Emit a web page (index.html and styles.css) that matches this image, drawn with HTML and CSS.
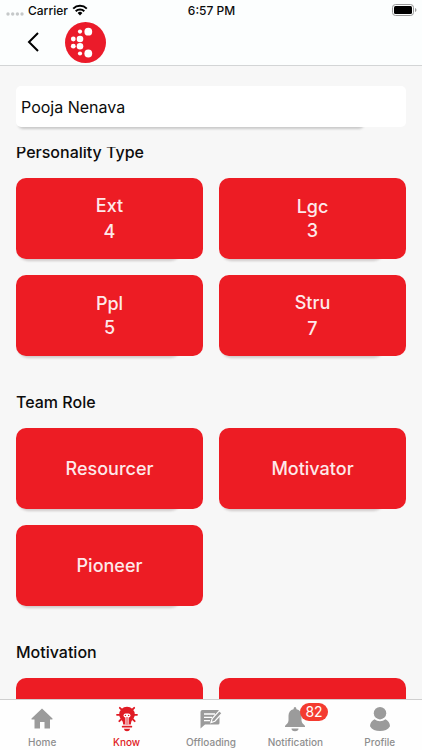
FILE: index.html
```html
<!DOCTYPE html>
<html lang="en">
<head>
<meta charset="utf-8">
<meta name="viewport" content="width=device-width, initial-scale=1">
<title>Know</title>
<link rel="stylesheet" href="styles.css">
</head>
<body>
<div class="app">
  <header class="header">
    <div class="status">
      <div class="carrier">
        <svg class="signal" viewBox="0 0 18 4" aria-hidden="true"><circle cx="2" cy="2" r="1.7"/><circle cx="6.7" cy="2" r="1.7"/><circle cx="11.4" cy="2" r="1.7"/><circle cx="16" cy="2" r="1.7"/></svg>
        <span>Carrier</span>
        <svg class="wifi" viewBox="0 0 16 12" aria-hidden="true"><path d="M1.2 4.6a9.8 9.8 0 0 1 13.6 0M3.7 7.2a6.2 6.2 0 0 1 8.6 0" fill="none" stroke="#000" stroke-width="2"/><path d="M5.6 9a3.5 3.5 0 0 1 4.8 0L8 11.5z"/></svg>
      </div>
      <time>6:57 PM</time>
      <svg class="battery" viewBox="0 0 25 12" aria-hidden="true"><rect x=".5" y=".5" width="21" height="11" rx="3" fill="none" stroke="#999"/><rect x="2" y="2" width="18" height="8" rx="1.5"/><path d="M23 4v4q1.500-.6 1.500-2T23 4" fill="#999"/></svg>
    </div>
    <nav class="nav">
      <button class="back" type="button" aria-label="Back"><svg viewBox="0 0 12 20" aria-hidden="true"><path d="M11 1L2 10l9 9" fill="none" stroke="#000" stroke-width="2"/></svg></button>
      <svg class="logo" viewBox="0 0 41 41" role="img" aria-label="Logo"><circle cx="20.500" cy="20.500" r="20.500" fill="#eb1b2a"/><g fill="#fff"><circle cx="23.300" cy="9.700" r="3.900"/><circle cx="15" cy="9.600" r="2.100"/><circle cx="15" cy="17" r="3.300"/><circle cx="8.300" cy="17" r="2.400"/><circle cx="15" cy="24.200" r="3.300"/><circle cx="8.300" cy="24.200" r="2.400"/><circle cx="15" cy="31.500" r="2.100"/><circle cx="23.300" cy="31.500" r="3.900"/></g></svg>
    </nav>
  </header>
  <div class="search">
    <input class="search-box" type="text" value="Pooja Nenava" aria-label="Person">
  </div>
  <main class="content">
    <div class="sections">
      <section>
        <h2>Personality Type</h2>
        <div class="cards">
          <div class="card spaced"><span>Ext</span><span>4</span></div>
          <div class="card"><span>Lgc</span><span>3</span></div>
          <div class="card"><span>Ppl</span><span>5</span></div>
          <div class="card spaced"><span>Stru</span><span>7</span></div>
        </div>
      </section>
      <section>
        <h2>Team Role</h2>
        <div class="cards">
          <div class="card"><span>Resourcer</span></div>
          <div class="card"><span>Motivator</span></div>
          <div class="card"><span>Pioneer</span></div>
        </div>
      </section>
      <section>
        <h2>Motivation</h2>
        <div class="cards">
          <div class="card"></div>
          <div class="card"></div>
        </div>
      </section>
    </div>
  </main>
  <nav class="tabs">
    <a class="tab" href="#home">
      <svg viewBox="0 0 24 26" aria-hidden="true"><path d="M12 2.500L1.500 12.600Q1 13.500 2 13.500h2.500V22.500h5.500v-6.500h4.500v6.500H20v-9h2q1 0 .5-.9z"/></svg>
      <span>Home</span>
    </a>
    <a class="tab active" href="#know" aria-current="page">
      <svg viewBox="0 0 24 26" aria-hidden="true"><path d="M12 .8a7.800 7.800 0 0 0-7.800 7.800c0 3.600 2.700 5.200 3.600 7.400l.4 2.500h7.600l.4-2.500c.9-2.200 3.600-3.800 3.600-7.400A7.800 7.800 0 0 0 12 .8z"/><path d="M6.500 3.500l-1.700-1.700M17.500 3.500l1.700-1.700M4.500 8.800H2M19.500 8.800H22M6 13.500l-1.700 1.700M18 13.500l1.700 1.700" stroke="currentColor" stroke-width="1.800" stroke-linecap="round"/><path d="M12 18.500V10" stroke="#fff" stroke-width="3.200"/><rect x="8.500" y="7.500" width="7" height="4" rx="2" fill="#fff"/><path d="M12 18.500V11" stroke="currentColor" stroke-width="1"/><circle cx="10.400" cy="9.400" r=".7"/><circle cx="13.600" cy="9.400" r=".7"/><rect x="6.800" y="19.700" width="10.400" height="1.900" rx=".9"/><path d="M8.800 22.700h6.400q-.7 2.500-3.200 2.500t-3.200-2.500z"/></svg>
      <span>Know</span>
    </a>
    <a class="tab" href="#offloading">
      <svg viewBox="0 0 24 26" aria-hidden="true"><path d="M3.500 4H19a1.500 1.500 0 0 1 1.500 1.500V17a1.500 1.500 0 0 1-1.500 1.500H6L1.500 22.500V6Q1.500 4 3.500 4z"/><path d="M5 8h11M5 11.300h8M5 14.600h6" stroke="#fff" stroke-width="1.300"/><path d="M12 16.500l1.200-4L20.500 4.700l2.600 2.500-7.200 8z" stroke="#fff" stroke-width="1.200"/></svg>
      <span>Offloading</span>
    </a>
    <a class="tab" href="#notification">
      <svg viewBox="0 0 24 26" aria-hidden="true"><path d="M12 1q1.300 0 1.500 2.300c3.200.7 5 3.200 5 6.500v4.700c0 2.500 2.500 4 3.500 5.500v1H2v-1c1-1.500 3.500-3 3.500-5.500V9.800c0-3.300 1.800-5.800 5-6.500Q10.700 1 12 1zM8.500 22.500h7a3.500 2.700 0 0 1-7 0z"/></svg>
      <span>Notification</span>
      <span class="badge">82</span>
    </a>
    <a class="tab" href="#profile">
      <svg viewBox="0 0 24 26" aria-hidden="true"><circle cx="12" cy="7.200" r="6.200"/><path d="M6.500 13.200a8.500 8.500 0 0 0 11 0c2.500 1.200 4.500 3.800 4.500 7C20 23.500 16.500 25 12 25S4 23.500 2 20.200c0-3.200 2-5.800 4.500-7z"/></svg>
      <span>Profile</span>
    </a>
  </nav>
</div>
</body>
</html>
```
FILE: styles.css
```css
* {
  box-sizing: border-box;
}

body {
  margin: 0;
  background: #f7f7f7;
  color: #0c0c0c;
  font-family: Inter, "Liberation Sans", sans-serif;
}

.app {
  display: flex;
  flex-direction: column;
  height: 100vh;
}

.header {
  background: #fcfefe;
  border-bottom: 1px solid #d3d5d6;
}

.status {
  display: grid;
  grid-template-columns: 1fr auto 1fr;
  align-items: center;
  height: 20px;
  padding: 0 5px 0 6px;
  font-size: 12px;
  font-weight: 500;
}

.carrier {
  display: flex;
  align-items: center;
  gap: 4px;
}

.signal {
  width: 18px;
  height: 4px;
  margin-top: 8px;
  fill: #c5c8c9;
}

.wifi {
  width: 16px;
  height: 12px;
}

.battery {
  width: 25px;
  height: 12px;
  justify-self: end;
}

.nav {
  display: flex;
  align-items: center;
  gap: 18px;
  height: 45px;
  padding: 0 19px 1px;
}

.back {
  display: flex;
  align-items: center;
  justify-content: center;
  width: 28px;
  height: 40px;
  padding: 0;
  border: 0;
  background: none;
}

.back svg {
  width: 12px;
  height: 20px;
}

.logo {
  width: 41px;
  height: 41px;
}

.search {
  position: relative;
  z-index: 0;
  padding: 20px 16px;
}

.search::after {
  content: "";
  position: absolute;
  z-index: -1;
  left: 18px;
  right: 58px;
  bottom: 18px;
  height: 12px;
  border-radius: 5px;
  background: #c9c9c9;
  filter: blur(1px);
}

.search-box {
  display: block;
  width: 100%;
  height: 41px;
  padding: 0 5px;
  border: 0;
  border-radius: 5px;
  background: #fff;
  color: #0c0c0c;
  font: 400 16px Inter, "Liberation Sans", sans-serif;
}

.content {
  flex: 1;
  min-height: 0;
  overflow-y: auto;
  scrollbar-width: none;
}

.sections {
  display: grid;
  gap: 34px;
  margin-top: -7px;
  padding: 0 16px 34px;
}

h2 {
  margin: 0 0 14px;
  font-size: 16px;
  font-weight: 500;
  line-height: 24px;
}

.cards {
  display: grid;
  grid-template-columns: 1fr 1fr;
  gap: 16px;
}

.card {
  position: relative;
  z-index: 0;
  display: flex;
  flex-direction: column;
  align-items: center;
  justify-content: center;
  height: 81px;
  color: #fde9ea;
  font-size: 18px;
  font-weight: 500;
  line-height: 24px;
}

.card::before,
.card::after {
  content: "";
  position: absolute;
  border-radius: 10px;
}

.card::before {
  z-index: -1;
  inset: 0;
  background: #ed1c24;
}

.card::after {
  z-index: -2;
  left: 2px;
  right: 12%;
  bottom: -2px;
  height: 24px;
  background: #cfcaca;
  filter: blur(1px);
}

.spaced {
  gap: 2px;
}

.tabs {
  display: grid;
  grid-template-columns: repeat(5, 1fr);
  height: 51px;
  border-top: 1px solid #cfcfcf;
  background: #fefefe;
}

.tab {
  position: relative;
  display: flex;
  flex-direction: column;
  align-items: center;
  gap: 2px;
  padding-top: 6px;
  color: #8e8e8e;
  font-size: 10px;
  font-weight: 500;
  line-height: 16px;
  text-decoration: none;
}

.tab svg {
  width: 24px;
  height: 26px;
  fill: #9b9b9b;
}

.tab.active,
.tab.active svg {
  color: #e01b24;
  fill: #e01b24;
}

.badge {
  position: absolute;
  top: 3px;
  left: calc(50% + 5px);
  padding: 0 5px;
  border-radius: 9px;
  background: #f43b30;
  color: #fff;
  font-size: 14px;
  font-weight: 400;
  line-height: 18px;
}
```
